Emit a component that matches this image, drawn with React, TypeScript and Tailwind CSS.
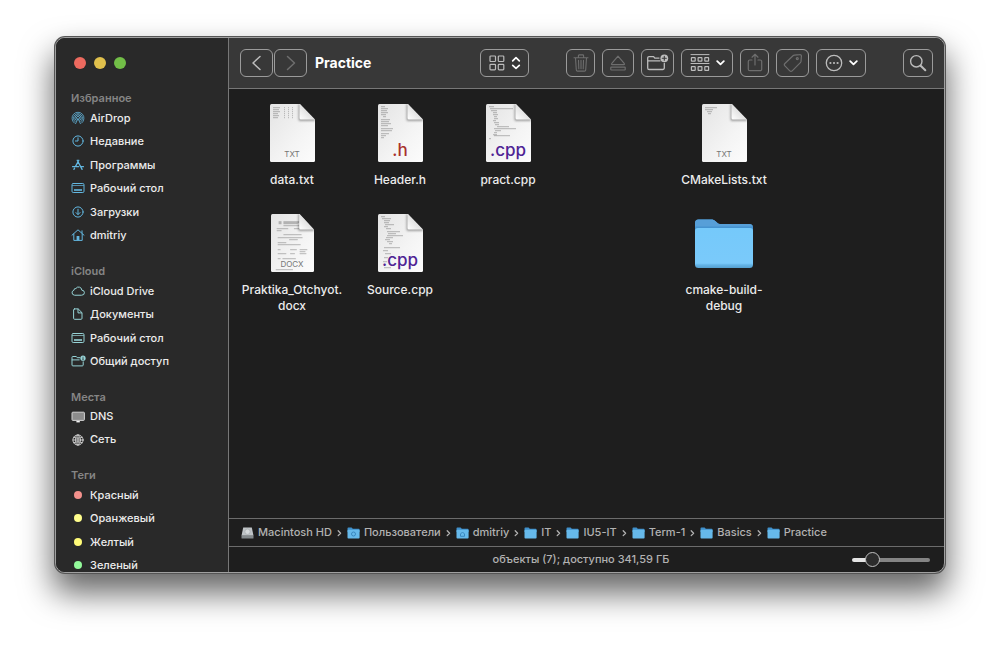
import { useState } from 'react'
import type { ReactNode } from 'react'

const stroke = {
  fill: 'none',
  stroke: 'currentColor',
  strokeLinecap: 'round',
  strokeLinejoin: 'round',
} as const

function AirDropIcon() {
  return (
    <svg width="14" height="14" viewBox="0 0 14 14" {...stroke} strokeWidth="0.8">
      <path d="M3.3 12A6 6 0 1 1 10.7 12" />
      <path d="M4 10.6A4.5 4.5 0 1 1 10 10.6" />
      <path d="M5 9.4A3.1 3.1 0 1 1 9 9.4" />
      <path d="M5.9 8.4A1.7 1.7 0 1 1 8.1 8.4" />
      <path d="M7 7.6L4.6 12.6M7 7.6l2.4 5" />
    </svg>
  )
}

function ClockIcon() {
  return (
    <svg width="14" height="14" viewBox="0 0 14 14" {...stroke}>
      <circle cx="7" cy="7" r="5.1" />
      <path d="M7 3.8V7H4.4" />
    </svg>
  )
}

function AppsIcon() {
  return (
    <svg width="14" height="14" viewBox="0 0 14 14" {...stroke} strokeWidth="1.3">
      <path d="M6.2 2.2l4.9 9.2M7.8 2.2L4.4 8.6M3.6 10.2l-.7 1.2M1.6 8.7h6M10.4 8.7h2" />
    </svg>
  )
}

function DesktopIcon() {
  return (
    <svg width="14" height="14" viewBox="0 0 14 14" {...stroke}>
      <rect x="1" y="2.5" width="12" height="9" rx="1.2" />
      <path d="M1.5 4.5h11" strokeOpacity="0.7" />
      <rect x="3" y="8.2" width="8" height="1.6" fill="currentColor" stroke="none" />
    </svg>
  )
}

function DownloadIcon() {
  return (
    <svg width="14" height="14" viewBox="0 0 14 14" {...stroke}>
      <circle cx="7" cy="7" r="5.1" />
      <path d="M7 4.2v5.2M5 7.6l2 2 2-2" />
    </svg>
  )
}

function HomeIcon() {
  return (
    <svg width="14" height="14" viewBox="0 0 14 14" {...stroke}>
      <path d="M1 7.2L7 1.8l6 5.4M2.8 6v6.4h8.4V6M11 5V2.8" />
      <rect x="5.6" y="8" width="2.8" height="4.4" fill="currentColor" stroke="none" />
    </svg>
  )
}

function CloudIcon() {
  return (
    <svg width="14" height="14" viewBox="0 0 14 14" {...stroke}>
      <path d="M3.3 11.2a2.5 2.5 0 0 1-.4-4.9 1.8 1.8 0 0 1 2-1.8 3.2 3.2 0 0 1 5.9 1.7 2.5 2.5 0 0 1 .2 5z" />
    </svg>
  )
}

function DocumentIcon() {
  return (
    <svg width="14" height="14" viewBox="0 0 14 14" {...stroke}>
      <path d="M3.6 1.9h3.6l3.8 3.8v5.6a1 1 0 0 1-1 1H3.6a1 1 0 0 1-1-1V2.9a1 1 0 0 1 1-1z" />
      <path d="M7 2.2v3.7h3.7" />
    </svg>
  )
}

function SharedIcon() {
  return (
    <svg width="16" height="14" viewBox="0 0 16 14" {...stroke} className="-mr-[2px]">
      <path d="M9 3.7H6.2L5.3 2.5H1.8a.8.8 0 0 0-.8.8V11a.9.9 0 0 0 .9.9h9.4a.9.9 0 0 0 .9-.9V7.8M1.2 5.9h7" />
      <circle cx="12" cy="4.2" r="2.6" fill="currentColor" stroke="none" />
      <path d="M12 3.2v.1M12 4.6v1" stroke="#292929" />
    </svg>
  )
}

function DisplayIcon() {
  return (
    <svg width="14" height="14" viewBox="0 0 14 14">
      <rect x="1" y="2.2" width="12.4" height="8.2" rx="0.8" fill="#8c8c8c" stroke="#d2d2d2" />
      <path d="M5.4 11h3.4v1.4H5.4z" fill="#f5f5f5" />
    </svg>
  )
}

function GlobeIcon() {
  return (
    <svg width="14" height="14" viewBox="0 0 14 14" {...stroke} strokeWidth="0.9">
      <circle cx="7" cy="7" r="5.1" />
      <ellipse cx="7" cy="7" rx="2.4" ry="5.1" />
      <path d="M7 2v10M2 7h10M2.8 4.3c2.6 1.2 5.8 1.2 8.4 0M2.8 9.7c2.6-1.2 5.8-1.2 8.4 0" />
    </svg>
  )
}

function Dot({ color }: { color: string }) {
  return <span className={`mx-[3px] block h-2 w-2 rounded-full ${color}`} />
}

type Item = { label: string; icon: ReactNode }

const sections: { title: string; height: string; tint: string; items: Item[] }[] = [
  {
    title: 'Избранное',
    height: 'h-[141px]',
    tint: 'text-[#63b7e0]',
    items: [
      { label: 'AirDrop', icon: <AirDropIcon /> },
      { label: 'Недавние', icon: <ClockIcon /> },
      { label: 'Программы', icon: <AppsIcon /> },
      { label: 'Рабочий стол', icon: <DesktopIcon /> },
      { label: 'Загрузки', icon: <DownloadIcon /> },
      { label: 'dmitriy', icon: <HomeIcon /> },
    ],
  },
  {
    title: 'iCloud',
    height: 'h-[94px]',
    tint: 'text-[#96d3d6]',
    items: [
      { label: 'iCloud Drive', icon: <CloudIcon /> },
      { label: 'Документы', icon: <DocumentIcon /> },
      { label: 'Рабочий стол', icon: <DesktopIcon /> },
      { label: 'Общий доступ', icon: <SharedIcon /> },
    ],
  },
  {
    title: 'Места',
    height: 'h-[46px]',
    tint: 'text-[#d4d4d4]',
    items: [
      { label: 'DNS', icon: <DisplayIcon /> },
      { label: 'Сеть', icon: <GlobeIcon /> },
    ],
  },
  {
    title: 'Теги',
    height: 'h-[94px]',
    tint: '',
    items: [
      { label: 'Красный', icon: <Dot color="bg-[#f3918c]" /> },
      { label: 'Оранжевый', icon: <Dot color="bg-[#fffd8c]" /> },
      { label: 'Желтый', icon: <Dot color="bg-[#fffb78]" /> },
      { label: 'Зеленый', icon: <Dot color="bg-[#93f99a]" /> },
    ],
  },
]

function Sidebar() {
  return (
    <aside className="flex w-[173px] shrink-0 flex-col overflow-hidden border-r border-[#777] bg-[#292929] pl-[15px]">
      <div className="mb-[2px] flex h-[50px] shrink-0 items-center gap-2 pl-[3px]">
        <button aria-label="Закрыть" className="h-3 w-3 rounded-full bg-[#ed6a5f]" />
        <button aria-label="Свернуть" className="h-3 w-3 rounded-full bg-[#e0c04c]" />
        <button aria-label="Развернуть" className="h-3 w-3 rounded-full bg-[#72be47]" />
      </div>
      <nav className="flex flex-col gap-4 text-[11px] font-medium">
        {sections.map((s) => (
          <section key={s.title}>
            <h2 className="h-4 leading-4 font-semibold text-[#858585]">{s.title}</h2>
            <ul className={`grid auto-rows-fr ${s.height}`}>
              {s.items.map((item) => (
                <li key={item.label} className="flex">
                  <button className="flex items-center gap-[5px] text-[#ececec]">
                    <span className={s.tint}>{item.icon}</span>
                    {item.label}
                  </button>
                </li>
              ))}
            </ul>
          </section>
        ))}
      </nav>
    </aside>
  )
}

function ToolButton({ label, width, dim, children }: { label: string; width: string; dim?: boolean; children: ReactNode }) {
  return (
    <button
      aria-label={label}
      className={`flex h-7 shrink-0 items-center justify-center gap-[6px] rounded-md border border-[#9b9b9b] ${width} ${
        dim ? 'text-[#6e6e6e]' : 'text-[#bcbcbc]'
      }`}
    >
      {children}
    </button>
  )
}

function Caret() {
  return (
    <svg width="9" height="6" viewBox="0 0 9 6" {...stroke} strokeWidth="1.8" className="text-white">
      <path d="M1.2 1.2l3.3 3.2 3.3-3.2" />
    </svg>
  )
}

function Toolbar() {
  return (
    <header className="flex h-[51px] shrink-0 items-center border-b border-[#777] bg-[#383838] px-[11px]">
      <div className="flex gap-px">
        <ToolButton label="Назад" width="w-[33px]">
          <svg width="10" height="16" viewBox="0 0 10 16" {...stroke} strokeWidth="1.5">
            <path d="M8 1.5L1 8l7 6.5" />
          </svg>
        </ToolButton>
        <ToolButton label="Вперед" width="w-[33px]" dim>
          <svg width="10" height="16" viewBox="0 0 10 16" {...stroke} strokeWidth="1.5">
            <path d="M1.5 1.5l7 6.5-7 6.5" />
          </svg>
        </ToolButton>
      </div>
      <h1 className="ml-2 flex-1 text-[14px] leading-5 font-bold text-white">Practice</h1>

      <ToolButton label="Вид" width="w-[49px]">
        <svg width="16" height="16" viewBox="0 0 16 16" {...stroke} strokeWidth="1.2">
          <rect x="1" y="1" width="5.5" height="5.5" rx="0.8" />
          <rect x="9.3" y="1" width="5.5" height="5.5" rx="0.8" />
          <rect x="1" y="9.3" width="5.5" height="5.5" rx="0.8" />
          <rect x="9.3" y="9.3" width="5.5" height="5.5" rx="0.8" />
        </svg>
        <svg width="10" height="14" viewBox="0 0 10 14" {...stroke} strokeWidth="1.7" className="text-white">
          <path d="M1.7 4.8L5 1.7l3.3 3.1M1.7 9.3L5 12.4l3.3-3.1" />
        </svg>
      </ToolButton>

      <div className="mx-[37px] flex gap-[7px]">
        <ToolButton label="Удалить" width="w-[29px]" dim>
          <svg width="16" height="18" viewBox="0 0 16 18" {...stroke} strokeWidth="1.1">
            <path d="M1 3.7h14M5.4 3.5V1.7a.8.8 0 0 1 .8-.8h3.6a.8.8 0 0 1 .8.8v1.8M2.5 4l.8 12a1.2 1.2 0 0 0 1.2 1.1h7a1.2 1.2 0 0 0 1.2-1.1l.8-12M5.5 6.2l.3 8.5M8 6.2v8.5M10.5 6.2l-.3 8.5" />
          </svg>
        </ToolButton>
        <ToolButton label="Извлечь" width="w-[32px]" dim>
          <svg width="16" height="16" viewBox="0 0 16 16" {...stroke} strokeWidth="1.2">
            <path d="M8 1.2L14.4 8.6a.6.6 0 0 1-.5 1H2.1a.6.6 0 0 1-.5-1z" />
            <rect x="0.8" y="12.1" width="14.4" height="2.9" rx="0.5" />
          </svg>
        </ToolButton>
        <ToolButton label="Новая папка" width="w-[33px]">
          <svg width="23" height="18" viewBox="0 0 23 18" {...stroke} strokeWidth="1.3">
            <path d="M13 4.1H8.8L7.6 2.6H3a1.3 1.3 0 0 0-1.3 1.3v10A1.6 1.6 0 0 0 3.3 15.500h13.4a1.6 1.6 0 0 0 1.6-1.6V9.3M1.9 6.8H14" />
            <circle cx="18.3" cy="4.3" r="3.9" fill="currentColor" stroke="none" />
            <path d="M18.3 2.3v4M16.3 4.3h4" stroke="#383838" strokeWidth="1.1" />
          </svg>
        </ToolButton>
        <ToolButton label="Группировать" width="w-[52px]">
          <svg width="20" height="18" viewBox="0 0 20 18" {...stroke} strokeWidth="1.2">
            <path d="M1 .6h18M1 9.500h18" strokeWidth="1" />
            <rect x="1.4" y="3.6" width="3.8" height="3.6" rx="0.4" />
            <rect x="8.1" y="3.6" width="3.8" height="3.6" rx="0.4" />
            <rect x="14.8" y="3.6" width="3.8" height="3.6" rx="0.4" />
            <rect x="1.4" y="12.6" width="3.8" height="3.8" rx="0.4" />
            <rect x="8.1" y="12.6" width="3.8" height="3.8" rx="0.4" />
            <rect x="14.8" y="12.6" width="3.8" height="3.8" rx="0.4" />
          </svg>
          <Caret />
        </ToolButton>
        <ToolButton label="Поделиться" width="w-[29px]" dim>
          <svg width="16" height="20" viewBox="0 0 16 20" {...stroke} strokeWidth="1.2">
            <path d="M5 7H2.800a1.500 1.500 0 0 0-1.500 1.500v7.700a1.500 1.500 0 0 0 1.500 1.500h10.400a1.500 1.500 0 0 0 1.500-1.500V8.500a1.500 1.500 0 0 0-1.500-1.500H11M8 12V1.500M5 4.200l3-2.900 3 2.900" />
          </svg>
        </ToolButton>
        <ToolButton label="Теги" width="w-[33px]" dim>
          <svg width="20" height="20" viewBox="0 0 20 20" {...stroke} strokeWidth="1.2">
            <path d="M11.300 2.200L16.700 1.600a1.500 1.500 0 0 1 1.700 1.700L18 8.400a2 2 0 0 1-.6 1.200l-8.200 8.200a1.700 1.700 0 0 1-2.400 0L1.900 12.900a1.700 1.700 0 0 1 0-2.400L10 2.800a2.200 2.200 0 0 1 1.300-.6z" />
            <circle cx="14.300" cy="5.600" r="1" />
          </svg>
        </ToolButton>
        <ToolButton label="Еще" width="w-[50px]">
          <svg width="18" height="18" viewBox="0 0 18 18" {...stroke} strokeWidth="1.3">
            <circle cx="9" cy="9" r="7.7" />
            <g fill="currentColor" stroke="none">
              <circle cx="5.400" cy="9" r="1.1" />
              <circle cx="9" cy="9" r="1.1" />
              <circle cx="12.600" cy="9" r="1.1" />
            </g>
          </svg>
          <Caret />
        </ToolButton>
      </div>

      <ToolButton label="Поиск" width="w-[30px]">
        <svg width="18" height="18" viewBox="0 0 18 18" {...stroke}>
          <circle cx="7.300" cy="7.300" r="5.700" strokeWidth="1.4" />
          <path d="M11.700 11.700l4.600 4.600" strokeWidth="2" />
        </svg>
      </ToolButton>
    </header>
  )
}

// faint lines of the document preview: x, y, width
type Line = [number, number, number]

const tableLines: Line[] = [
  [3, 3, 7], [3, 5, 6], [3, 7, 7], [3, 9, 5], [3, 11, 6], [3, 13, 5],
  [14, 3, 1], [14, 5, 1], [14, 7, 1], [14, 9, 1], [14, 11, 1], [14, 13, 1],
  [18, 3, 1], [18, 5, 1], [18, 7, 1], [18, 9, 1], [18, 11, 1], [18, 13, 1],
  [22, 3, 1], [22, 5, 1], [22, 7, 1], [22, 9, 1], [22, 11, 1], [22, 13, 1],
]
const headerLines: Line[] = [
  [3, 2, 4], [3, 4, 7], [3, 6, 6], [3, 8, 7], [3, 10, 5], [5, 12, 3],
  [3, 15, 9], [3, 17, 8], [3, 19, 10], [3, 21, 7], [3, 24, 12], [3, 26, 11], [3, 29, 8], [3, 31, 5], [3, 33, 3],
]
const cppLines: Line[] = [
  [3, 2, 5], [4, 4, 23], [5, 6, 6], [7, 8, 4], [7, 10, 5], [8, 12, 3], [8, 14, 4], [7, 16, 3],
  [8, 18, 5], [9, 20, 4], [11, 22, 12], [8, 24, 22], [9, 26, 6], [8, 28, 3], [7, 30, 4], [8, 31, 16], [3, 34, 2],
]
const sourceLines: Line[] = [
  [3, 2, 4], [4, 4, 9], [6, 6, 6], [6, 8, 5], [7, 10, 9], [6, 12, 4], [8, 14, 5], [9, 17, 13], [10, 19, 8],
  [9, 21, 16], [8, 23, 7], [7, 25, 5], [9, 27, 6], [11, 29, 3], [6, 33, 16], [5, 36, 5], [7, 39, 6], [6, 43, 4], [5, 47, 4], [6, 53, 7],
]
const cmakeLines: Line[] = [[3, 3, 12], [3, 5, 8], [5, 7, 5], [6, 9, 3]]
const docxLines: Line[] = [
  [8, 7, 3], [8, 8, 3], [8, 9, 3], [13, 7, 17], [13, 8, 17], [13, 9, 15], [13, 11, 17], [6, 14, 12], [24, 14, 6],
  [6, 16, 5], [13, 20, 19], [7, 23, 26], [19, 25, 9], [7, 28, 9], [7, 30, 24], [7, 35, 3], [20, 35, 7], [30, 35, 8],
  [30, 37, 6], [7, 39, 9], [20, 39, 5], [30, 39, 7], [7, 44, 3], [12, 44, 14], [5, 55, 18],
]

function FilePage({ lines, tag, tagClass, narrow }: { lines: Line[]; tag: string; tagClass: string; narrow?: boolean }) {
  return (
    <span className="relative block">
      <svg width={narrow ? 43 : 45} height="58" viewBox="0 0 45 58" preserveAspectRatio="none">
        <defs>
          <linearGradient id="page" x1="0" y1="0" x2="1" y2="1">
            <stop offset="0" stopColor="#e4e4e4" />
            <stop offset="0.6" stopColor="#f4f4f4" />
            <stop offset="1" stopColor="#fcfcfc" />
          </linearGradient>
          <linearGradient id="fold" x1="0" y1="1" x2="0.5" y2="0.5">
            <stop offset="0" stopColor="#ffffff" />
            <stop offset="1" stopColor="#e2e2e2" />
          </linearGradient>
          <filter id="foldShadow" x="-30%" y="-30%" width="160%" height="160%">
            <feGaussianBlur stdDeviation="1" />
          </filter>
          <clipPath id="pageShape">
            <path d="M1.500 0H30l15 15.500V56.500a1.500 1.500 0 0 1-1.500 1.500h-42A1.500 1.500 0 0 1 0 56.500v-55A1.500 1.500 0 0 1 1.500 0z" />
          </clipPath>
        </defs>
        <g clipPath="url(#pageShape)">
          <path d="M0 0h45v58H0z" fill="url(#page)" />
          {lines.map(([x, y, w], i) => (
            <path key={i} d={`M${x} ${y + 0.7}h${w}`} stroke="#444" strokeOpacity="0.4" strokeWidth="0.9" />
          ))}
          <path d="M28.500 0V15.500a1.500 1.500 0 0 0 1.500 1.500H45V15L30 0z" fill="#000" fillOpacity="0.35" filter="url(#foldShadow)" />
          <path d="M29.500 0V14a1.500 1.500 0 0 0 1.500 1.500H45L30 0z" fill="url(#fold)" />
        </g>
      </svg>
      <span className={`absolute inset-x-0 text-center ${tagClass}`}>{tag}</span>
    </span>
  )
}

function FolderLarge() {
  return (
    <svg width="58" height="58" viewBox="0 0 58 58">
      <defs>
        <linearGradient id="folderFront" x1="0" y1="0" x2="0" y2="1">
          <stop offset="0" stopColor="#75c9fa" />
          <stop offset="0.880" stopColor="#7acafa" />
          <stop offset="0.920" stopColor="#64b5e8" />
          <stop offset="1" stopColor="#559fce" />
        </linearGradient>
      </defs>
      <path d="M0 9a3.500 3.500 0 0 1 3.500-3.500H16c2.200 0 3.300.6 4.600 1.800l1.600 1.400c1.200 1 2 1.300 3.600 1.300h28.700A3.500 3.500 0 0 1 58 13.500V40H0z" fill="#4593d0" />
      <path d="M0 9a3.500 3.500 0 0 1 3.500-3.500H16c2.200 0 3.300.6 4.600 1.800l1.600 1.400c1.200 1 2 1.300 3.600 1.300h28.700c1.800 0 3 1 3.400 2.600H0z" fill="#579fd8" />
      <path d="M0 17a3 3 0 0 1 3-3h52a3 3 0 0 1 3 3v33.500a3.500 3.500 0 0 1-3.500 3.500h-51A3.500 3.500 0 0 1 0 50.500z" fill="url(#folderFront)" />
    </svg>
  )
}

const txtTag = 'bottom-[2px] text-[8px] leading-[12px] text-[#757575]'
const cppTag = 'bottom-[2px] text-[17px] leading-5 font-medium text-[#4f2394]'

const files: { name: string; place?: string; icon: ReactNode }[] = [
  { name: 'data.txt', icon: <FilePage lines={tableLines} tag="TXT" tagClass={txtTag} /> },
  {
    name: 'Header.h',
    icon: <FilePage lines={headerLines} tag=".h" tagClass="bottom-[2px] text-[17px] leading-5 font-medium text-[#a8322c]" />,
  },
  { name: 'pract.cpp', icon: <FilePage lines={cppLines} tag=".cpp" tagClass={cppTag} /> },
  { name: 'CMakeLists.txt', place: 'col-start-5', icon: <FilePage lines={cmakeLines} tag="TXT" tagClass={txtTag} /> },
  {
    name: 'Praktika_Otchyot.\ndocx',
    place: 'col-start-1',
    icon: <FilePage lines={docxLines} tag="DOCX" tagClass={txtTag} narrow />,
  },
  { name: 'Source.cpp', icon: <FilePage lines={sourceLines} tag=".cpp" tagClass={cppTag} /> },
  { name: 'cmake-build-\ndebug', place: 'col-start-5', icon: <FolderLarge /> },
]

function FileGrid() {
  return (
    <main className="grid flex-1 auto-rows-[110px] grid-cols-[repeat(auto-fill,108px)] overflow-hidden pt-[15px] pl-[9px]">
      {files.map((f) => (
        <button key={f.name} className={`flex flex-col items-center gap-[10px] ${f.place ?? ''}`}>
          {f.icon}
          <span className="text-[12px] leading-4 font-medium whitespace-pre text-[#ececec]">{f.name}</span>
        </button>
      ))}
    </main>
  )
}

function SmallFolder({ mark }: { mark?: 'users' | 'home' }) {
  return (
    <svg width="13" height="12" viewBox="0 0 13 12">
      <path d="M0.500 1.500a.9.9 0 0 1 .9-.9h3.200l1.200 1.100h5.900a.9.9 0 0 1 .9.9V5H.5z" fill="#3f8fca" />
      <rect x="0.500" y="2.800" width="12.100" height="8.700" rx="0.9" fill="#66b9ea" />
      {mark === 'users' && <circle cx="6.500" cy="7" r="2" fill="none" stroke="#3a88bf" />}
      {mark === 'home' && <path d="M4.500 7l2-2 2 2v2.300h-4z" fill="none" stroke="#3a88bf" />}
    </svg>
  )
}

function DiskIcon() {
  return (
    <svg width="13" height="12" viewBox="0 0 13 12">
      <path d="M2.200.5h8.600l1.700 8.200H.5z" fill="#bfc4c7" />
      <circle cx="6.500" cy="4.700" r="2.700" fill="#d5d9db" stroke="#9da3a6" strokeWidth="0.6" />
      <rect x="0.500" y="8.500" width="12" height="3" rx="0.500" fill="#83898c" />
    </svg>
  )
}

const path: Item[] = [
  { label: 'Macintosh HD', icon: <DiskIcon /> },
  { label: 'Пользователи', icon: <SmallFolder mark="users" /> },
  { label: 'dmitriy', icon: <SmallFolder mark="home" /> },
  { label: 'IT', icon: <SmallFolder /> },
  { label: 'IU5-IT', icon: <SmallFolder /> },
  { label: 'Term-1', icon: <SmallFolder /> },
  { label: 'Basics', icon: <SmallFolder /> },
  { label: 'Practice', icon: <SmallFolder /> },
]

function PathBar() {
  return (
    <nav className="flex h-7 shrink-0 items-center gap-[5px] border-t border-[#6c6c6c] pl-3 text-[11px] font-medium text-[#b2b2b2]">
      {path.map((p, i) => (
        <div key={p.label} className="flex items-center gap-[5px]">
          <a href="#" className="flex items-center gap-1">
            {p.icon}
            {p.label}
          </a>
          {i < path.length - 1 && (
            <svg width="5" height="8" viewBox="0 0 5 8" {...stroke} strokeWidth="1.3">
              <path d="M1.200 1.800L3.600 4.200 1.200 6.600" />
            </svg>
          )}
        </div>
      ))}
    </nav>
  )
}

function StatusBar() {
  const [size, setSize] = useState(21)

  return (
    <footer className="grid h-[26px] shrink-0 grid-cols-[1fr_auto_1fr] items-center border-t border-[#6c6c6c] pr-[14px] pl-[3px]">
      <p className="col-start-2 text-[11px] font-medium text-[#b2b2b2]">объекты (7); доступно 341,59 ГБ</p>
      <input
        type="range"
        aria-label="Размер значков"
        min={0}
        max={100}
        value={size}
        onChange={(e) => setSize(Number(e.target.value))}
        style={{ backgroundImage: `linear-gradient(to right, #e4e4e4 ${size}%, #848484 ${size}%)` }}
        className="h-1 w-[78px] appearance-none justify-self-end rounded-full [&::-webkit-slider-thumb]:h-[15px] [&::-webkit-slider-thumb]:w-[15px] [&::-webkit-slider-thumb]:appearance-none [&::-webkit-slider-thumb]:rounded-full [&::-webkit-slider-thumb]:border [&::-webkit-slider-thumb]:border-[#c0c0c0] [&::-webkit-slider-thumb]:bg-[#2c2c2c]"
      />
    </footer>
  )
}

export default function App() {
  return (
    <div className="flex h-screen bg-white px-[55px] pt-[37px] pb-[73px] font-[Inter,sans-serif]">
      <div className="flex min-w-0 flex-1 overflow-hidden rounded-[10px] border border-[#a0a0a0] bg-[#1e1e1e] shadow-[0_0_0_1px_#555,0_18px_32px_2px_rgba(0,0,0,0.6)]">
        <Sidebar />
        <div className="flex min-w-0 flex-1 flex-col">
          <Toolbar />
          <FileGrid />
          <PathBar />
          <StatusBar />
        </div>
      </div>
    </div>
  )
}
